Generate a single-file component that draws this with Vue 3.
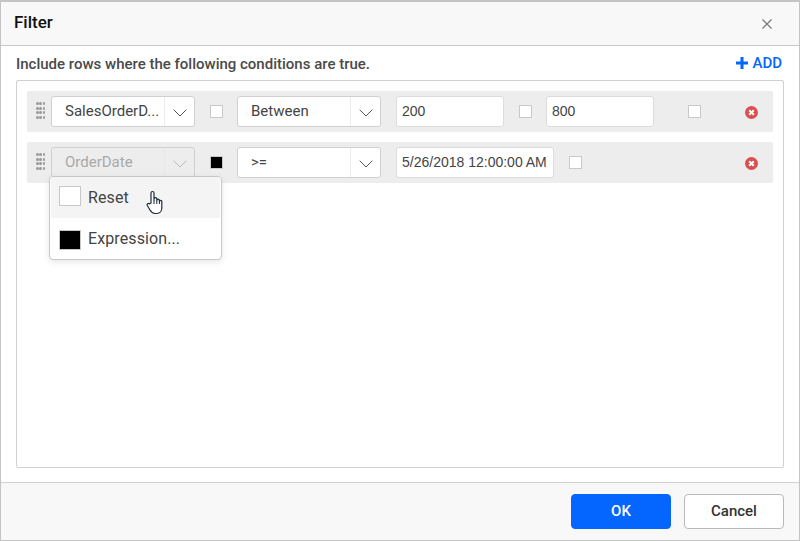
<script setup>
const rows = 12
</script>

<template>
  <div class="dialog">
    <header class="head">
      <span class="title">Filter</span>
      <svg class="close" width="10" height="10" viewBox="0 0 10 10"><path d="M.5.5l9 9M9.500.5l-9 9" stroke="#777" stroke-width="1.200" fill="none"/></svg>
    </header>
    <main class="body">
      <div class="intro">
        <span class="label">Include rows where the following conditions are true.</span>
        <span class="add">
          <svg width="12" height="12" viewBox="0 0 12 12"><path d="M6 0v12M0 6h12" stroke="#0565ff" stroke-width="3" fill="none"/></svg>
          ADD
        </span>
      </div>
      <section class="panel">
        <div class="row">
          <div class="grip"><i v-for="n in rows" :key="n"></i></div>
          <div class="select">
            <span class="value">SalesOrderD...</span>
            <span class="arrow"><svg width="14" height="8" viewBox="0 0 14 8"><path d="M.7.7L7 7l6.300-6.300" stroke="#555" stroke-width="1" fill="none"/></svg></span>
          </div>
          <span class="check c1"></span>
          <div class="select s2">
            <span class="value">Between</span>
            <span class="arrow"><svg width="14" height="8" viewBox="0 0 14 8"><path d="M.7.7L7 7l6.300-6.300" stroke="#555" stroke-width="1" fill="none"/></svg></span>
          </div>
          <div class="input w108">200</div>
          <span class="check c3"></span>
          <div class="input w108">800</div>
          <span class="check c4"></span>
          <svg class="remove" width="13" height="13" viewBox="0 0 13 13"><circle cx="6.500" cy="6.500" r="6.500" fill="#d9504f"/><path d="M4.200 4.200l4.600 4.600M8.800 4.200l-4.600 4.600" stroke="#fff" stroke-width="2" fill="none"/></svg>
        </div>
        <div class="row second">
          <div class="grip"><i v-for="n in rows" :key="n"></i></div>
          <div class="select disabled">
            <span class="value">OrderDate</span>
            <span class="arrow"><svg width="14" height="8" viewBox="0 0 14 8"><path d="M.7.7L7 7l6.300-6.300" stroke="#bbb" stroke-width="1" fill="none"/></svg></span>
          </div>
          <span class="check c1 black"></span>
          <div class="select s2">
            <span class="value">&gt;=</span>
            <span class="arrow"><svg width="14" height="8" viewBox="0 0 14 8"><path d="M.7.7L7 7l6.300-6.300" stroke="#555" stroke-width="1" fill="none"/></svg></span>
          </div>
          <div class="input w158">5/26/2018 12:00:00 AM</div>
          <span class="check c3"></span>
          <svg class="remove" width="13" height="13" viewBox="0 0 13 13"><circle cx="6.500" cy="6.500" r="6.500" fill="#d9504f"/><path d="M4.200 4.200l4.600 4.600M8.800 4.200l-4.600 4.600" stroke="#fff" stroke-width="2" fill="none"/></svg>
          <div class="menu">
            <div class="item hover"><span class="swatch up"></span>Reset</div>
            <div class="item"><span class="swatch dark"></span>Expression...</div>
            <svg class="hand" width="18" height="25" viewBox="0 0 18 25"><path d="M5 13V3a1.500 1.500 0 0 1 3 0v7V9a1.400 1.400 0 0 1 2.800 0v1.500a1.300 1.300 0 0 1 2.600 0v1a1.200 1.200 0 0 1 2.400 0V18c0 3-2 5.500-5 5.500H9c-2.500 0-3.500-1-5-3.500L1.300 15.500c-.8-1.500 1-2.800 2.200-1.500z" fill="#fff" stroke="#1f2a3a" stroke-width="1.200" stroke-linejoin="round"/><path d="M8 10v4M10.800 10.500v3.500M13.400 11.500v2.500" stroke="#1f2a3a" stroke-width="1" fill="none"/></svg>
          </div>
        </div>
      </section>
    </main>
    <footer class="foot">
      <button class="btn ok">OK</button>
      <button class="btn cancel">Cancel</button>
    </footer>
  </div>
</template>

<style>
html, body { margin: 0; background: #fff; }
</style>

<style scoped>
.dialog {
  width: 800px;
  height: 541px;
  box-sizing: border-box;
  border: 1px solid #c4c4c4;
  border-top: 2px solid #c4c4c4;
  display: flex;
  flex-direction: column;
  font-family: Roboto, "Liberation Sans", sans-serif;
  color: #333;
  background: #fff;
}
.head {
  height: 43px;
  flex: none;
  background: #f8f8f8;
  border-bottom: 1px solid #c8c8c8;
  display: flex;
  align-items: center;
  justify-content: space-between;
  padding: 0 27px 0 13px;
}
.title { font-size: 17px; font-weight: 500; color: #111; position: relative; top: -2px; }
.body { flex: 1; display: flex; flex-direction: column; padding: 0 15px; min-height: 0; }
.intro {
  height: 34px;
  flex: none;
  display: flex;
  align-items: center;
  justify-content: space-between;
  padding-right: 2px;
}
.label { font-size: 15px; font-weight: 500; color: #4a4a4a; position: relative; top: 1px; }
.add {
  display: flex;
  align-items: center;
  gap: 4px;
  font-size: 15px;
  font-weight: 500;
  color: #0565ff;
}
.panel {
  height: 388px;
  box-sizing: border-box;
  border: 1px solid #d0d0d0;
  border-radius: 2px;
  padding: 10px;
}
.row {
  height: 41px;
  background: #ededed;
  border-radius: 2px;
  display: flex;
  align-items: center;
  position: relative;
}
.second { margin-top: 10px; }
.grip {
  width: 9px;
  height: 17px;
  margin-left: 9px;
  margin-right: 6px;
  flex: none;
  display: grid;
  grid-template-columns: repeat(3, 2.5px);
  grid-template-rows: repeat(4, 3px);
  justify-content: space-between;
  align-content: space-between;
  position: relative;
  top: -1px;
}
.grip i { width: 2.5px; height: 3px; border-radius: 50%; background: #9c9c9c; }
.select {
  width: 144px;
  height: 31px;
  box-sizing: border-box;
  background: #fff;
  border: 1px solid #d0d0d0;
  border-radius: 3px;
  display: flex;
  align-items: center;
  font-size: 15px;
  color: #444;
  flex: none;
}
.value { flex: 1; padding-left: 13px; position: relative; top: -1px; white-space: nowrap; }
.arrow {
  width: 30px;
  height: 29px;
  box-sizing: border-box;
  padding-top: 3px;
  flex: none;
  border-left: 1px solid #ececec;
  display: flex;
  align-items: center;
  justify-content: center;
}
.disabled { background: #ededed; color: #a9a9a9; }
.disabled .arrow { border-left-color: #e8e8e8; }
.check {
  width: 13px;
  height: 13px;
  box-sizing: border-box;
  background: #fff;
  border: 1px solid #c9c9c9;
  flex: none;
}
.black { background: #000; }
.c1 { margin-left: 15px; margin-right: 14px; }
.s2 { margin-right: 15px; }
.c3 { margin-left: 15px; margin-right: 14px; }
.c4 { margin-left: 34px; }
.input {
  height: 31px;
  box-sizing: border-box;
  background: #fff;
  border: 1px solid #dcdcdc;
  border-radius: 3px;
  display: flex;
  align-items: center;
  font-family: "Liberation Sans", Arial, sans-serif;
  font-size: 14px;
  color: #444;
  padding: 0 0 2px 5px;
  white-space: nowrap;
  flex: none;
}
.w108 { width: 108px; }
.w158 { width: 158px; }
.remove { position: absolute; left: 718px; top: 15px; }
.menu {
  position: absolute;
  left: 22px;
  top: 34px;
  width: 173px;
  height: 84px;
  box-sizing: border-box;
  background: #fff;
  border: 1px solid #c8c8c8;
  border-radius: 4px;
  box-shadow: 0 2px 6px rgba(0, 0, 0, .1);
}
.item {
  height: 41px;
  display: flex;
  align-items: center;
  padding-left: 9px;
  font-size: 16px;
  letter-spacing: .1px;
  color: #444;
  gap: 7px;
}
.hover { background: #f4f4f4; margin: 0 1px; padding-left: 8px; }
.swatch {
  width: 22px;
  height: 20px;
  box-sizing: border-box;
  border: 1px solid #c9c9c9;
  background: #fff;
  flex: none;
}
.up { margin-top: -3px; }
.dark { background: #000; margin-top: 3px; }
.hand { position: absolute; left: 96px; top: 13px; }
.foot {
  height: 57px;
  flex: none;
  background: #f8f8f8;
  border-top: 1px solid #d0d0d0;
  display: flex;
  align-items: center;
  justify-content: flex-end;
  gap: 13px;
  padding-right: 15px;
}
.btn {
  width: 100px;
  height: 35px;
  box-sizing: border-box;
  border-radius: 4px;
  padding: 0 0 2px;
  font-family: Roboto, "Liberation Sans", sans-serif;
  font-size: 15px;
  font-weight: 500;
}
.ok { background: #0565ff; border: 1px solid #0565ff; color: #fff; }
.cancel { background: #fff; border: 1px solid #b9b9b9; color: #333; }
</style>
